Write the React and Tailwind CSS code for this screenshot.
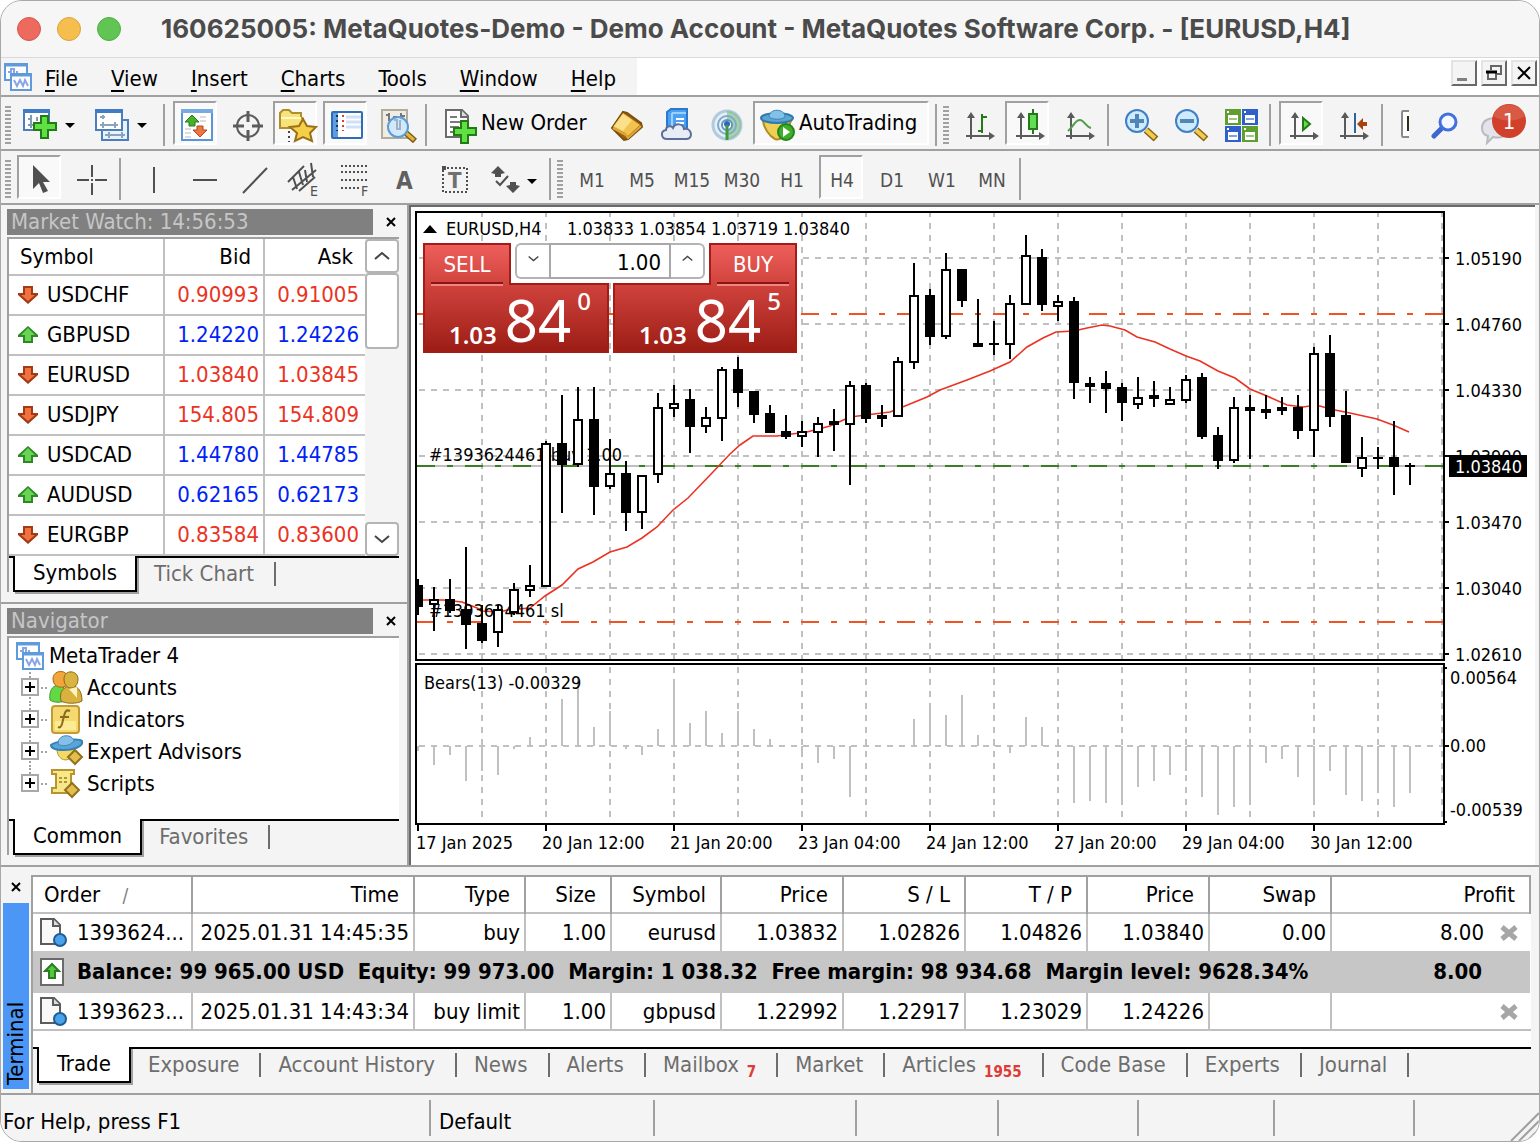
import React, { useState } from 'react';

const quotes = [
    { symbol: 'USDCHF', bid: '0.90993', ask: '0.91005', up: false },
    { symbol: 'GBPUSD', bid: '1.24220', ask: '1.24226', up: true },
    { symbol: 'EURUSD', bid: '1.03840', ask: '1.03845', up: false },
    { symbol: 'USDJPY', bid: '154.805', ask: '154.809', up: false },
    { symbol: 'USDCAD', bid: '1.44780', ask: '1.44785', up: true },
    { symbol: 'AUDUSD', bid: '0.62165', ask: '0.62173', up: true },
    { symbol: 'EURGBP', bid: '0.83584', ask: '0.83600', up: false },
];

const orders = [
    ['1393624...', '2025.01.31 14:45:35', 'buy', '1.00', 'eurusd', '1.03832', '1.02826', '1.04826', '1.03840', '0.00', '8.00'],
    ['1393623...', '2025.01.31 14:43:34', 'buy limit', '1.00', 'gbpusd', '1.22992', '1.22917', '1.23029', '1.24226', '', ''],
];

const timeframes = ['M1', 'M5', 'M15', 'M30', 'H1', 'H4', 'D1', 'W1', 'MN'];

const menus = ['File', 'View', 'Insert', 'Charts', 'Tools', 'Window', 'Help'];

// [high, low, body top, body bottom, filled] in chart units
const candles = [
    [579, 615, 585, 607, 1], [587, 631, 599, 605, 0], [579, 613, 599, 611, 1], [547, 649, 609, 625, 1],
    [605, 643, 623, 641, 1], [605, 647, 609, 633, 0], [583, 615, 589, 613, 0], [565, 597, 585, 591, 0],
    [441, 587, 443, 587, 0], [395, 513, 443, 465, 1], [387, 467, 419, 465, 0], [387, 515, 419, 487, 1],
    [439, 489, 473, 487, 0], [461, 531, 473, 513, 1], [475, 529, 475, 513, 0], [393, 483, 407, 475, 0],
    [385, 417, 403, 409, 0], [389, 453, 399, 427, 1], [407, 433, 417, 427, 0], [367, 441, 369, 419, 0],
    [357, 407, 369, 393, 1], [391, 423, 391, 415, 1], [405, 433, 413, 433, 1], [415, 439, 431, 437, 1],
    [421, 447, 431, 437, 0], [417, 457, 423, 433, 0], [409, 451, 421, 425, 1], [381, 485, 385, 425, 0],
    [383, 423, 385, 419, 1], [405, 427, 415, 419, 1], [357, 417, 361, 417, 0], [263, 369, 295, 363, 0],
    [289, 345, 295, 337, 1], [253, 339, 269, 337, 0], [269, 307, 269, 301, 1], [299, 347, 343, 347, 1],
    [321, 355, 343, 345, 1], [295, 359, 303, 345, 0], [235, 305, 255, 305, 0], [249, 311, 257, 305, 1],
    [295, 321, 301, 307, 0], [297, 399, 301, 383, 1], [377, 403, 383, 387, 1], [371, 413, 383, 389, 1],
    [383, 421, 387, 403, 1], [377, 409, 397, 405, 0], [381, 407, 395, 399, 1], [387, 405, 399, 405, 0],
    [375, 403, 379, 401, 0], [373, 439, 377, 437, 1], [427, 469, 435, 461, 1], [397, 463, 407, 461, 0],
    [395, 459, 407, 411, 1], [395, 419, 409, 413, 1], [397, 415, 407, 411, 1], [395, 439, 407, 431, 1],
    [347, 457, 353, 431, 0], [335, 427, 353, 417, 1], [391, 463, 415, 463, 1], [437, 477, 457, 469, 0],
    [447, 469, 457, 459, 1], [421, 495, 457, 467, 1], [463, 485, 465, 467, 1],
];

const bears = [
    751, 765, 755, 781, 771, 775, 749, 737, 739, 699, 677, 727, 711, 749, 755, 729, 679, 723, 711, 733, 711,
    729, 739, 746, 757, 763, 759, 797, 746, 746, 746, 719, 703, 715, 695, 735, 739, 753, 717, 727, 739, 803,
    801, 803, 805, 787, 781, 775, 771, 797, 815, 807, 805, 763, 759, 777, 805, 771, 795, 801, 793, 807, 793,
];

const average =
    '418,600 443,600 462,602 477,608 482,611 500,612 507,610 530,608 545,596 562,585 578,569 593,562 610,552 ' +
    '627,547 642,538 657,527 673,510 688,498 713,472 730,454 740,445 753,436 777,436 807,432 830,426 850,417 ' +
    '890,412 905,406 927,397 940,390 967,380 990,371 1010,362 1027,347 1043,338 1056,332 1074,331 1087,328 ' +
    '1102,325 1110,326 1125,330 1137,337 1155,342 1170,349 1186,356 1200,361 1218,371 1235,378 1250,389 ' +
    '1267,396 1287,405 1303,407 1310,406 1320,406 1330,409 1350,413 1377,419 1393,425 1409,432';

const priceLevels = [
    [258, '1.05190'], [324, '1.04760'], [390, '1.04330'], [456, '1.03900'],
    [522, '1.03470'], [588, '1.03040'], [654, '1.02610'],
];

const dates = [
    '17 Jan 2025', '20 Jan 12:00', '21 Jan 20:00', '23 Jan 04:00',
    '24 Jan 12:00', '27 Jan 20:00', '29 Jan 04:00', '30 Jan 12:00',
];

/* ---------- icons ---------- */

const Icon = ({ children, size = 36 }) => (
    <svg width={size} height={size} viewBox={`0 0 ${size} ${size}`} className="block shrink-0 overflow-visible" aria-hidden="true">
        {children}
    </svg>
);

const Plus = ({ x, y }) => (
    <path
        transform={`translate(${x} ${y})`}
        d="M8 1h7v7h8v7h-8v8H8v-8H1V8h7z"
        fill="#5fe043"
        stroke="#237a17"
        strokeWidth="2"
    />
);

const NewChartIcon = () => (
    <Icon>
        <rect x="-1" y="1" width="25" height="20" fill="#fff" stroke="#4a7fbd" strokeWidth="2" />
        <rect x="-2" y="0" width="27" height="4" fill="#3f7cc4" />
        <path d="M6 6v13M3 10h3M3 16h15M12 8v4" stroke="#7f9ab8" strokeWidth="2" fill="none" />
        <Plus x={8} y={6} />
    </Icon>
);

const ProfilesIcon = () => (
    <Icon>
        <rect x="5" y="11" width="26" height="20" fill="#eaf3fc" stroke="#4a7fbd" strokeWidth="2" />
        <path d="M8 26h20M12 23v6M25 23v6" stroke="#8aa3bf" strokeWidth="2" />
        <rect x="-1" y="1" width="26" height="20" fill="#fff" stroke="#4a7fbd" strokeWidth="2" />
        <rect x="-2" y="0" width="28" height="4" fill="#3f7cc4" />
        <path d="M6 6v4M3 8h5M3 16h18M6 13v6M18 13v6" stroke="#8aa3bf" strokeWidth="2" />
    </Icon>
);

const MarketWatchIcon = () => (
    <Icon>
        <rect x="1" y="1" width="30" height="30" fill="#fff" stroke="#5b95d6" strokeWidth="2" />
        <rect x="0" y="0" width="32" height="4" fill="#78abe4" />
        <path d="M19 8h8M19 12h8M4 20h7M4 24h7M4 28h7" stroke="#d9dde2" strokeWidth="2" strokeDasharray="6 2" />
        <path d="M11 6l7 7h-4v4H8v-4H4z" fill="#46b02a" stroke="#2f7d1c" />
        <path d="M19 28l7-7h-4v-4h-6v4h-4z" fill="#ec7744" stroke="#b5451e" />
    </Icon>
);

const TargetIcon = () => (
    <Icon>
        <circle cx="17" cy="17" r="11" fill="none" stroke="#5c5c5c" strokeWidth="2" />
        <path d="M17 2v11M17 21v11M2 17h11M21 17h11" stroke="#5c5c5c" strokeWidth="3" />
    </Icon>
);

const star = 'M22 10l4 7 9 1-6 6 2 8-9-4-8 4 2-8-7-6 9-1z';

const NavigatorIcon = () => (
    <Icon>
        <path d="M-1 19V4l3-3h6l3 3h9v4l2 2v9z" fill="#f8e27a" stroke="#b08e2c" strokeWidth="2" />
        <path d="M0 9h20" stroke="#fff8c8" strokeWidth="2" />
        <path d="M8 22v11" stroke="#444" strokeWidth="2" strokeDasharray="2 3" />
        <path d={star} fill="#f6cf48" stroke="#9a6f18" strokeWidth="2" />
    </Icon>
);

const TerminalIcon = () => (
    <Icon>
        <rect x="1" y="3" width="30" height="26" rx="1" fill="#fff" stroke="#2f6cb3" strokeWidth="2" />
        <rect x="2" y="4" width="5" height="24" fill="#5e9be0" />
        <path d="M15 8h15M15 13h15M15 18h15" stroke="#cfe0f8" strokeWidth="3" />
        <path d="M6 6v16" stroke="#1c3454" strokeWidth="2" strokeDasharray="2 3" />
        <path d="M12 6v16" stroke="#e23c2c" strokeWidth="2" strokeDasharray="2 3" />
    </Icon>
);

const TesterIcon = () => (
    <Icon>
        <rect x="1" y="1" width="25" height="28" fill="#efece4" stroke="#b3ab9b" strokeWidth="2" />
        <path d="M8 4v8M5 6h3M20 4v8M20 7h4M12 8h4" stroke="#777" strokeWidth="2" />
        <path d="M25 24l9 8" stroke="#7d5a12" strokeWidth="6" />
        <path d="M25 24l8 7" stroke="#e3b340" strokeWidth="3" />
        <circle cx="17" cy="18" r="10" fill="#cfe9fb" fillOpacity=".9" stroke="#5a9bd8" strokeWidth="2" />
        <path d="M13 11h3v9h3v-9" fill="none" stroke="#9db4c8" strokeWidth="2" />
    </Icon>
);

const NewOrderIcon = () => (
    <Icon>
        <path d="M3 1h16l6 6v21H3z" fill="#fff" stroke="#6b6b6b" strokeWidth="2" />
        <path d="M18 1v7h7" fill="#ddd" stroke="#6b6b6b" strokeWidth="2" />
        <path d="M7 8h7M7 13h13M7 18h9M7 23h5" stroke="#7a7a7a" strokeWidth="2" />
        <Plus x={10} y={11} />
    </Icon>
);

const BookIcon = () => (
    <Icon>
        <path d="M1 19L12 3l4 1 14 10 1 4-14 12-4 1z" fill="#9a6412" stroke="#7d4e0d" strokeWidth="2" />
        <path d="M2 18L12 4l17 12-12 11-3-3z" fill="#f1c34e" />
        <path d="M3 17l9-12 9 6-9 11z" fill="#fbe08a" />
        <path d="M2 19l13 7 2 3 13-12" fill="none" stroke="#e0a83a" strokeWidth="2" />
    </Icon>
);

const HostingIcon = () => (
    <Icon>
        <path d="M6 3l4-3h16v20H6z" fill="#4ba1f2" stroke="#2b78cc" strokeWidth="2" />
        <path d="M11 4h14M11 4v14" stroke="#9bd0ff" strokeWidth="2" />
        <path d="M15 10h8M15 14h8" stroke="#fff" strokeWidth="2" />
        <path
            d="M6 30c-6 0-7-8-1-9 0-4 5-5 7-2 2-5 10-5 11 1 7-2 10 9 3 10z"
            fill="#e8ecf5"
            stroke="#5b6f9a"
            strokeWidth="2"
        />
    </Icon>
);

const SignalsIcon = () => (
    <Icon>
        <circle cx="16" cy="16" r="14" fill="#e6eff6" stroke="#b0cbe0" strokeWidth="3" />
        <path d="M16 2a14 14 0 0 1 0 28z" fill="#7dbb7c" fillOpacity=".6" />
        <circle cx="16" cy="16" r="9" fill="none" stroke="#7fabc9" strokeWidth="2" />
        <circle cx="16" cy="16" r="5" fill="#fff" stroke="#5c93c7" strokeWidth="2" />
        <circle cx="16" cy="15" r="3" fill="#2c66c2" />
        <path d="M16 16v15" stroke="#3f9a37" strokeWidth="3" />
    </Icon>
);

const AutoTradingIcon = () => (
    <Icon>
        <path d="M2 12c1 7 6 15 12 18 5 2 10-2 16-18z" fill="#f0cf57" stroke="#b48d25" strokeWidth="2" />
        <ellipse cx="16" cy="9" rx="16" ry="5" fill="#5ba4d4" stroke="#2f7aad" strokeWidth="2" />
        <path d="M8 8c0-9 16-9 16 0-4 3-12 3-16 0z" fill="#84c1e8" stroke="#3a86b8" />
        <circle cx="25" cy="23" r="8" fill="#3fae2a" stroke="#23851a" strokeWidth="2" />
        <path d="M22 18l7 5-7 5z" fill="#fff" />
    </Icon>
);

const Axes = ({ children }) => (
    <Icon>
        <path d="M8 30V6M3 27h26" stroke="#5a5a5a" strokeWidth="2" />
        <path d="M4 9l4-6 4 6zM26 23l6 4-6 4z" fill="#5a5a5a" />
        {children}
    </Icon>
);

const ZoomIcon = ({ plus }) => (
    <Icon>
        <path d="M21 21l10 9" stroke="#8a6512" strokeWidth="7" />
        <path d="M21 21l9 8" stroke="#f0cb52" strokeWidth="4" />
        <circle cx="12" cy="12" r="11" fill="#cdeaff" stroke="#3f7fc4" strokeWidth="2" />
        <path d={plus ? 'M5 12h14M12 5v14' : 'M5 12h14'} stroke="#4f86b4" strokeWidth="4" />
    </Icon>
);

const TileIcon = () => (
    <Icon>
        {[[0, 0, '#5f9e2f'], [17, 0, '#2f5fc8'], [0, 17, '#2f5fc8'], [17, 17, '#5f9e2f']].map(([x, y, c]) => (
            <g key={`${x}-${y}`}>
                <rect x={x} y={y} width="16" height="16" fill={c} />
                <rect x={x + 3} y={y + 6} width="10" height="8" fill="#fff" />
                <path d={`M${x + 4} ${y + 10}h8`} stroke={c} strokeWidth="2" strokeOpacity=".6" />
                <path d={`M${x + 2} ${y + 3}h2`} stroke="#fff" strokeWidth="2" />
            </g>
        ))}
    </Icon>
);

const CandleMark = () => (
    <>
        <path d="M20 0v25" stroke="#237a17" strokeWidth="2" />
        <rect x="16" y="5" width="8" height="15" fill="#63dd55" stroke="#237a17" strokeWidth="2" />
    </>
);

const AlertIcon = () => (
    <svg width="48" height="42" viewBox="0 0 48 42" className="block" aria-label="1 notification">
        <path d="M1 25c0-8 8-11 16-9s12 9 8 15c-3 4-8 4-13 3l-6 6 1-7c-4-1-6-4-6-8z" fill="#e3e3ea" stroke="#b9b9bf" strokeWidth="2" />
        <circle cx="28" cy="18" r="17" fill="#d0402b" />
        <path d="M12 13a17 17 0 0 1 32 0 30 30 0 0 1-32 0z" fill="#d85a44" />
        <text x="28" y="26" textAnchor="middle" fontSize="22" fill="#fff">1</text>
    </svg>
);

const DirectionIcon = ({ up }) => (
    <svg width="22" height="20" viewBox="0 0 22 20" className="block shrink-0" aria-hidden="true">
        {up ? (
            <>
                <path d="M11 1l10 9v2h-5v6H6v-6H1v-2z" fill="#2c8a24" />
                <path d="M11 3l7 7h-4v6H8v-6H4z" fill="#6bd354" />
            </>
        ) : (
            <>
                <path d="M11 19L1 10V8h5V1h10v7h5v2z" fill="#a23a14" />
                <path d="M11 16l-7-6h4V3h6v7h4z" fill="#f3713f" />
            </>
        )}
    </svg>
);

const LogoIcon = () => (
    <svg width="30" height="30" viewBox="0 0 30 30" className="block shrink-0" aria-hidden="true">
        <rect x="2" y="2" width="22" height="16" fill="#fff" stroke="#5f9bdc" strokeWidth="2" />
        <path d="M1 3h24" stroke="#5f9bdc" strokeWidth="3" />
        <path d="M5 10h3v-3h3v6h3v-4" fill="none" stroke="#8aa5e6" strokeWidth="2" />
        <rect x="8" y="12" width="20" height="16" fill="#fff" stroke="#5f9bdc" strokeWidth="2" />
        <path d="M7 13h22" stroke="#5f9bdc" strokeWidth="3" />
        <path d="M11 18l3 6 3-6 3 6 2-6 3 6" fill="none" stroke="#8aa5e6" strokeWidth="2" />
    </svg>
);

const AccountsIcon = () => (
    <Icon size={34}>
        <path d="M1 29c-1-9 2-14 8-15s8 6 8 15c-4 3-12 3-16 0z" fill="#62d844" stroke="#3a9a28" />
        <path d="M4 8c0-10 14-9 14-3v9c-4 4-14 3-14-6z" fill="#f2a53a" stroke="#a66b18" />
        <path d="M12 30c-2-9 2-14 9-15s12 4 12 15c-5 3-16 3-21 0z" fill="#d8b23c" stroke="#8a6a18" />
        <path d="M15 8c0-10 14-9 14 0 0 12-14 12-14 0z" fill="#d9b440" stroke="#8a6a18" />
        <path d="M20 18l8 9V16z" fill="#fff4c0" />
    </Icon>
);

const IndicatorsIcon = () => (
    <Icon size={34}>
        <rect x="3" y="3" width="27" height="27" rx="3" fill="#f4d970" stroke="#c49a35" strokeWidth="2" />
        <rect x="6" y="18" width="21" height="9" fill="#fbeb92" />
        <path d="M21 8c-4-2-5 1-6 5l-2 8c-1 3-2 4-4 3M11 14h9" fill="none" stroke="#8a6a1c" strokeWidth="2" />
    </Icon>
);

const Diamond = ({ x, y }) => (
    <path transform={`translate(${x} ${y})`} d="M7 0l7 7-7 7-7-7z" fill="#e2be4d" stroke="#93701e" strokeWidth="2" />
);

const ExpertsIcon = () => (
    <Icon size={34}>
        <path d="M8 14c0 14 16 15 18 0z" fill="#f3d965" stroke="#b8942f" />
        <path d="M2 10c3-3 27-8 31-4 2 6-10 9-18 9S2 14 2 10z" fill="#5ba4d8" stroke="#3582b6" strokeWidth="2" />
        <path d="M9 9c0-11 15-10 16-3-4 5-12 6-16 3z" fill="#84bfe8" stroke="#3f88bd" />
        <Diamond x={19} y={15} />
    </Icon>
);

const ScriptsIcon = () => (
    <Icon size={34}>
        <path d="M3 3h22v4h-3v14h3v5H3v-5h4V7H3z" fill="#f6e78b" stroke="#b8942f" strokeWidth="2" />
        <path d="M10 11h9M10 15h9" stroke="#b8942f" strokeWidth="2" strokeDasharray="3 2" />
        <Diamond x={16} y={16} />
    </Icon>
);

const Caret = () => <span className="block border-x-5 border-t-5 border-x-transparent border-t-black" />;

/* ---------- small controls ---------- */

const ToolButton = ({ label, pressed, wide, children }) => (
    <button
        type="button"
        aria-label={label}
        aria-pressed={pressed}
        className={`flex h-11 shrink-0 items-start border-2 pt-1.5 pl-1.5 ${wide || 'w-11'} ${
            pressed ? 'border-t-[#a0a0a0] border-r-white border-b-white border-l-[#a0a0a0] bg-[#f9f9f9]' : 'border-transparent'
        }`}
    >
        {children}
    </button>
);

const Separator = ({ className = '' }) => <span className={`h-[42px] w-0.5 shrink-0 self-center bg-[#a0a0a0] ${className}`} />;

const Grip = () => (
    <span className="h-[38px] w-1.5 shrink-0 self-center bg-[repeating-linear-gradient(#a0a0a0_0_2px,#f4f4f4_2px_4px)]" />
);

const CloseButton = ({ label }) => (
    <button type="button" aria-label={label} className="flex h-6 w-6 items-center justify-center">
        <svg width="10" height="10" viewBox="0 0 10 10" stroke="#000" strokeWidth="2">
            <path d="M1 1l8 8M9 1l-8 8" />
        </svg>
    </button>
);

const TabStrip = ({ tabs, label }) => {
    const [active, setActive] = useState(tabs[0].name);

    return (
        <div className="flex h-9 border-t-2 border-black bg-[#f4f4f4] pl-1" role="tablist" aria-label={label}>
            {tabs.map((tab) =>
                tab.name === active ? (
                    <button
                        key={tab.name}
                        type="button"
                        role="tab"
                        aria-selected="true"
                        className="-mt-0.5 h-9 border-2 border-t-0 border-black bg-white px-[18px] shadow-[2px_2px_0_#a0a0a0]"
                    >
                        {tab.name}
                    </button>
                ) : (
                    <button
                        key={tab.name}
                        type="button"
                        role="tab"
                        aria-selected="false"
                        onClick={() => setActive(tab.name)}
                        className="flex h-8 items-center pl-[17px] text-[#6d6d6d]"
                    >
                        {tab.name}
                        {tab.count && <span className="mt-3.5 ml-2 text-[15px] leading-4 font-bold text-[#e03a34]">{tab.count}</span>}
                        <span className="ml-5 h-6 w-0.5 bg-[#6d6d6d]" />
                    </button>
                )
            )}
        </div>
    );
};

const PanelHeader = ({ title }) => (
    <div className="flex h-[26px] items-center justify-between pr-1">
        <h2 className="mr-1.5 h-full flex-1 bg-[#808080] pl-1 leading-[26px] text-[#c6c6c6]">{title}</h2>
        <CloseButton label={`Close ${title}`} />
    </div>
);

/* ---------- window chrome ---------- */

const TitleBar = () => (
    <header className="flex h-14 shrink-0 items-center bg-[#f6f6f6] pl-4">
        <div className="flex gap-4">
            <button type="button" aria-label="Close" className="h-6 w-6 rounded-full border border-[#d9574c] bg-[#ee6a5f]" />
            <button type="button" aria-label="Minimize" className="h-6 w-6 rounded-full border border-[#dba43a] bg-[#f5be4f]" />
            <button type="button" aria-label="Zoom" className="h-6 w-6 rounded-full border border-[#50ad43] bg-[#61c554]" />
        </div>
        <h1 className="ml-10 font-[Inter,sans-serif] text-[26px] leading-9 font-bold whitespace-nowrap text-[#4b4b4b]">
            160625005: MetaQuotes-Demo - Demo Account - MetaQuotes Software Corp. - [EURUSD,H4]
        </h1>
    </header>
);

const mdiClass = 'flex h-[26px] w-[26px] items-center justify-center border-2 border-t-[#e3e3e3] border-r-[#696969] border-b-[#696969] border-l-[#e3e3e3] bg-[#f4f4f4]';

const MenuBar = () => (
    <div className="flex h-10 shrink-0 items-start justify-between border-t border-b-2 border-t-[#d9d9d9] border-b-[#a0a0a0] bg-white">
        <nav className="flex h-full items-center bg-[#f4f4f4] pl-0.5">
            <LogoIcon />
            {menus.map((name) => (
                <button key={name} type="button" className="mr-[9px] px-3 pt-1">
                    <span className="underline decoration-2 underline-offset-4">{name[0]}</span>
                    {name.slice(1)}
                </button>
            ))}
        </nav>
        <div className="flex gap-1 pt-0.5 pr-0.5">
            <button type="button" aria-label="Minimize chart" className={mdiClass}>
                <span className="mt-3 mr-1 h-[3px] w-2.5 bg-[#808080]" />
            </button>
            <button type="button" aria-label="Restore chart" className={mdiClass}>
                <svg width="18" height="18" viewBox="0 0 18 18" fill="none" stroke="#666" strokeWidth="2">
                    <path d="M6 6V2h10v8h-4" />
                    <rect x="3" y="8" width="8" height="7" />
                    <path d="M1 8h11" stroke="#000" strokeWidth="3" />
                </svg>
            </button>
            <button type="button" aria-label="Close chart" className={mdiClass}>
                <svg width="16" height="16" viewBox="0 0 16 16" stroke="#000" strokeWidth="2">
                    <path d="M2 2l12 12M14 2L2 14" />
                </svg>
            </button>
        </div>
    </div>
);

const barClass = 'flex h-[54px] shrink-0 items-start gap-1.5 overflow-hidden border-b-2 border-[#a0a0a0] bg-[#f4f4f4] pt-1 pl-1';

const MainToolbar = () => (
    <div className={barClass}>
        <Grip />
        <ToolButton label="New chart" wide="w-[66px]">
            <NewChartIcon />
            <span className="mt-3.5 ml-1"><Caret /></span>
        </ToolButton>
        <ToolButton label="Profiles" wide="w-[66px]">
            <ProfilesIcon />
            <span className="mt-3.5 ml-1"><Caret /></span>
        </ToolButton>
        <Separator className="mx-0.5" />
        <ToolButton label="Market Watch" pressed><MarketWatchIcon /></ToolButton>
        <ToolButton label="Data Window"><TargetIcon /></ToolButton>
        <ToolButton label="Navigator" pressed><NavigatorIcon /></ToolButton>
        <ToolButton label="Terminal" pressed><TerminalIcon /></ToolButton>
        <ToolButton label="Strategy Tester"><TesterIcon /></ToolButton>
        <Separator className="mx-0.5" />
        <ToolButton label="New Order" wide="w-[162px]">
            <NewOrderIcon />
            <span className="ml-0.5 whitespace-nowrap">New Order</span>
        </ToolButton>
        <ToolButton label="MetaEditor"><BookIcon /></ToolButton>
        <ToolButton label="Virtual hosting"><HostingIcon /></ToolButton>
        <ToolButton label="Signals"><SignalsIcon /></ToolButton>
        <ToolButton label="AutoTrading" pressed wide="w-[176px]">
            <AutoTradingIcon />
            <span className="ml-0.5 whitespace-nowrap">AutoTrading</span>
        </ToolButton>
        <Separator />
        <Grip />
        <ToolButton label="Bar chart">
            <Axes><path d="M19 5v19M19 8h5M15 22h4" stroke="#237a17" strokeWidth="2" /></Axes>
        </ToolButton>
        <ToolButton label="Candlesticks" pressed><Axes><CandleMark /></Axes></ToolButton>
        <ToolButton label="Line chart">
            <Axes><path d="M5 22c6-5 7-11 12-11 4 0 6 7 11 8" fill="none" stroke="#4f9d4a" strokeWidth="2" /></Axes>
        </ToolButton>
        <Separator className="mx-0.5" />
        <ToolButton label="Zoom in"><ZoomIcon plus /></ToolButton>
        <ToolButton label="Zoom out"><ZoomIcon /></ToolButton>
        <ToolButton label="Tile windows"><TileIcon /></ToolButton>
        <Separator className="mx-0.5" />
        <ToolButton label="Auto scroll" pressed>
            <Axes><path d="M16 9l7 6-7 6z" fill="#5fe043" stroke="#237a17" strokeWidth="2" /></Axes>
        </ToolButton>
        <ToolButton label="Chart shift">
            <Axes>
                <path d="M18 4v20" stroke="#2d6799" strokeWidth="2" />
                <path d="M20 15l6-6v4h4v4h-4v4z" fill="#a8400f" />
            </Axes>
        </ToolButton>
        <Separator className="mx-0.5" />
        <button type="button" aria-label="Indicators" className="mt-2 ml-2.5 h-8 w-2 shrink-0">
            <svg width="8" height="30" viewBox="0 0 8 30">
                <path d="M8 1H2Q1 1 1 3v22q0 2 1 2h6" fill="#fff" stroke="#8a8a8a" strokeWidth="2" />
                <path d="M7 6v15" stroke="#26331a" strokeWidth="2" />
            </svg>
        </button>
        <div className="ml-auto flex gap-4 pr-2.5">
            <button type="button" aria-label="Search" className="mt-2 mr-1">
                <svg width="30" height="30" viewBox="0 0 30 30">
                    <path d="M3 24l8-8" stroke="#3d66cf" strokeWidth="5" strokeLinecap="round" />
                    <circle cx="17" cy="10" r="8" fill="#f4f8ff" stroke="#4271dc" strokeWidth="3" />
                </svg>
            </button>
            <button type="button" className="mt-0.5"><AlertIcon /></button>
        </div>
    </div>
);

const gray = { fill: 'none', stroke: '#505050', strokeWidth: 2 };

const LineToolbar = () => (
    <div className={barClass}>
        <Grip />
        <ToolButton label="Cursor" pressed>
            <Icon><path d="M8 2v24l6-6 4 10 5-2-5-9h7z" fill="#505050" /></Icon>
        </ToolButton>
        <ToolButton label="Crosshair">
            <Icon><path d="M17 2v12M17 20v12M2 17h12M20 17h12M16 17h2" {...gray} /></Icon>
        </ToolButton>
        <Separator className="mx-0.5" />
        <ToolButton label="Vertical line"><Icon><path d="M17 4v26" {...gray} /></Icon></ToolButton>
        <ToolButton label="Horizontal line"><Icon><path d="M6 17h24" {...gray} /></Icon></ToolButton>
        <ToolButton label="Trendline"><Icon><path d="M6 30L30 5" {...gray} /></Icon></ToolButton>
        <ToolButton label="Equidistant channel">
            <Icon>
                <path d="M1 19L17 3M5 27L29 7M12 28l16-14M6 14l4 12M12 9l4 13M18 7l2 12M24 0l2 14" {...gray} />
                <text x="23" y="33" fontSize="14" fill="#505050">E</text>
            </Icon>
        </ToolButton>
        <ToolButton label="Fibonacci retracement">
            <Icon>
                <path d="M4 3h28M4 9h28M4 17h28M4 25h18" {...gray} strokeDasharray="2 2" />
                <text x="24" y="33" fontSize="14" fill="#505050">F</text>
            </Icon>
        </ToolButton>
        <ToolButton label="Text">
            <Icon><text x="9" y="26" fontSize="24" fontWeight="bold" fill="#606060">A</text></Icon>
        </ToolButton>
        <ToolButton label="Text label">
            <Icon>
                <rect x="6" y="5" width="24" height="24" {...gray} strokeDasharray="2 2" />
                <path d="M5 3h4v4H5z" fill="#505050" />
                <text x="11" y="25" fontSize="22" fontWeight="bold" fill="#707070">T</text>
            </Icon>
        </ToolButton>
        <ToolButton label="Arrows" wide="w-16">
            <Icon>
                <path d="M11 3l7 7-4 1v3H8v-3l-4-1zM26 30l7-7-4-1v-3h-6v3l-4 1z" fill="#505050" />
                <path d="M9 18l4 4 8-9" {...gray} />
            </Icon>
            <span className="mt-4 ml-1"><Caret /></span>
        </ToolButton>
        <Separator />
        <Grip />
        {timeframes.map((tf) => (
            <button
                key={tf}
                type="button"
                aria-pressed={tf === 'H4'}
                className={`h-11 w-11 shrink-0 border-2 pt-1.5 pl-0.5 text-center text-[19px] text-[#505050] ${
                    tf === 'H4' ? 'border-t-[#a0a0a0] border-r-white border-b-white border-l-[#a0a0a0] bg-[#f9f9f9]' : 'border-transparent'
                }`}
            >
                <span className="-mx-2">{tf}</span>
            </button>
        ))}
        <Separator />
    </div>
);

/* ---------- left column ---------- */

const Chevron = ({ up, size = 16 }) => (
    <svg width={size} height={size} viewBox="0 0 16 16" fill="none" stroke="#444" strokeWidth="2" aria-hidden="true">
        <path d={up ? 'M1 11l7-6 7 6' : 'M1 5l7 6 7-6'} />
    </svg>
);

const scrollClass = 'flex w-full items-center justify-center rounded border-2 border-[#b4b4b4] bg-white';

const MarketWatch = () => (
    <section className="border-b-2 border-[#a0a0a0] pt-1 pb-2.5 pl-1.5">
        <PanelHeader title="Market Watch: 14:56:53" />
        <div className="mt-0.5 mr-2 border-t-2 border-l-2 border-[#a0a0a0]">
            <div className="flex">
                <table className="flex-1 table-fixed border-collapse bg-white">
                    <thead>
                        <tr className="h-9 border-b-2 border-[#c0c0c0]">
                            <th className="w-[155px] border-r-2 border-[#c0c0c0] pl-[11px] text-left font-normal">Symbol</th>
                            <th className="w-[100px] border-r-2 border-[#c0c0c0] pr-3 text-right font-normal">Bid</th>
                            <th className="pr-3 text-right font-normal">Ask</th>
                        </tr>
                    </thead>
                    <tbody>
                        {quotes.map((q) => (
                            <tr key={q.symbol} className="h-10 border-b-2 border-[#c0c0c0]">
                                <td className="border-r-2 border-[#c0c0c0] pl-2">
                                    <span className="flex items-center gap-2"><DirectionIcon up={q.up} />{q.symbol}</span>
                                </td>
                                <td className={`border-r-2 border-[#c0c0c0] pr-1 text-right ${q.up ? 'text-[#0022f5]' : 'text-[#ea3323]'}`}>{q.bid}</td>
                                <td className={`pr-1.5 text-right ${q.up ? 'text-[#0022f5]' : 'text-[#ea3323]'}`}>{q.ask}</td>
                            </tr>
                        ))}
                    </tbody>
                </table>
                <div className="flex w-[34px] shrink-0 flex-col justify-between bg-[#f4f4f4]">
                    <div>
                        <button type="button" aria-label="Scroll up" className={`h-[34px] ${scrollClass}`}><Chevron up /></button>
                        <div className={`h-[76px] ${scrollClass}`} />
                    </div>
                    <button type="button" aria-label="Scroll down" className={`h-[34px] ${scrollClass}`}><Chevron /></button>
                </div>
            </div>
            <TabStrip label="Market Watch" tabs={[{ name: 'Symbols' }, { name: 'Tick Chart' }]} />
        </div>
    </section>
);

const TreeItem = ({ name, icon, last }) => (
    <li className="flex h-8 items-center pl-3">
        <button type="button" aria-label={`Expand ${name}`}>
            <svg width="28" height="32" viewBox="0 0 28 32" className="block">
                <path d={last ? 'M9 0v7M20 16h8' : 'M9 0v7M9 25v7M20 16h8'} stroke="#a0a0a0" strokeWidth="2" strokeDasharray="2 2" />
                <rect x="1" y="7" width="16" height="16" fill="#fff" stroke="#a8a8a8" strokeWidth="2" />
                <path d="M4 15h10M9 10v10" stroke="#000" strokeWidth="2" />
            </svg>
        </button>
        {icon}
        <span className="ml-1">{name}</span>
    </li>
);

const Navigator = () => (
    <section className="flex flex-1 flex-col pt-1 pb-2.5 pl-1.5">
        <PanelHeader title="Navigator" />
        <div className="mt-0.5 mr-2 flex flex-1 flex-col border-t-2 border-l-2 border-[#a0a0a0]">
            <ul className="flex-1 bg-white pt-0.5">
                <li className="flex h-8 items-center gap-1 pl-1.5"><LogoIcon />MetaTrader 4</li>
                <TreeItem name="Accounts" icon={<AccountsIcon />} />
                <TreeItem name="Indicators" icon={<IndicatorsIcon />} />
                <TreeItem name="Expert Advisors" icon={<ExpertsIcon />} />
                <TreeItem name="Scripts" icon={<ScriptsIcon />} last />
            </ul>
            <TabStrip label="Navigator" tabs={[{ name: 'Common' }, { name: 'Favorites' }]} />
        </div>
    </section>
);

/* ---------- chart ---------- */

const TradeSide = ({ side, pips, fraction }) => {
    const buy = side === 'BUY';
    return (
        <button type="button" className={`flex flex-col text-white ${buy ? 'w-[184px] items-end' : 'w-[186px] items-start'}`}>
            <span className="z-10 -mb-0.5 h-[42px] w-[88px] border-2 border-b-0 border-[#a31c15] bg-linear-to-b from-[#ee5f5b] to-[#d0423c] px-1.5 pt-1.5">
                <span className="block border-b-2 border-[#8b1510] pb-[3px] leading-7 shadow-[0_2px_0_#ee8580]">{side}</span>
            </span>
            <span className="flex h-[70px] w-full border-2 border-[#a31c15] bg-linear-to-b from-[#d0423c] to-[#9c1d15] pl-6 font-['Noto_Sans',sans-serif]">
                <span className="mt-[34px] text-[24px] leading-8 font-semibold">1.03</span>
                <span className="ml-2 text-[58px] leading-[70px]">{pips}</span>
                <span className="mt-0.5 ml-1.5 text-[24px] leading-7 font-medium">{fraction}</span>
            </span>
        </button>
    );
};

const OneClickTrading = () => {
    const [volume, setVolume] = useState('1.00');
    const step = (d) => setVolume((v) => Math.max(0.01, Number(v) + d).toFixed(2));
    const stepClass = 'flex w-[34px] items-center justify-center border-2 border-[#b4b4b4] pb-1.5';

    return (
        <div className="absolute top-9 left-3">
            <div className="flex gap-1">
                <TradeSide side="SELL" pips="84" fraction="0" />
                <TradeSide side="BUY" pips="84" fraction="5" />
            </div>
            <div className="absolute top-0 left-[88px] flex h-10 w-[198px] justify-center bg-white pb-1">
                <button type="button" aria-label="Decrease volume" onClick={() => step(-0.01)} className={`${stepClass} rounded-l-md border-r-0`}>
                    <Chevron size={11} />
                </button>
                <input
                    aria-label="Volume"
                    value={volume}
                    onChange={(e) => setVolume(e.target.value)}
                    className="w-[122px] border-2 border-[#a8a8a8] bg-white pt-1 pr-2 text-right outline-none"
                />
                <button type="button" aria-label="Increase volume" onClick={() => step(0.01)} className={`${stepClass} rounded-r-md border-l-0`}>
                    <Chevron up size={11} />
                </button>
            </div>
        </div>
    );
};

const columns = Array.from({ length: 16 }, (_, i) => 482 + i * 64);

const PriceChart = () => (
    <svg viewBox="411 207 1124 658" className="block w-full" fontSize="18" role="img" aria-label="EURUSD H4 price chart">
        <g stroke="#c0c0c0" strokeWidth="2" strokeDasharray="6 6">
            {columns.map((x) => <path key={x} d={`M${x} 211V659M${x} 667V823`} />)}
            {priceLevels.map(([y]) => <path key={y} d={`M419 ${y}H1443`} />)}
            <path d="M419 746H1443" />
        </g>
        <path d="M417 466H1443" stroke="#c0c0c0" strokeWidth="2" />
        <path d="M417 466H1443" stroke="#3a7d22" strokeWidth="2" strokeDasharray="18 12 6 12" />
        <path d="M417 314H1443M417 622H1443" stroke="#f05423" strokeWidth="2" strokeDasharray="18 12 6 12" />
        <polyline points={average} fill="none" stroke="#ea3323" strokeWidth="1.6" />

        <path d="M423 233l7-8 7 8z" />
        <text x="446" y="235">EURUSD,H4</text>
        {['1.03833', '1.03854', '1.03719', '1.03840'].map((p, i) => <text key={p} x={567 + i * 72} y="235">{p}</text>)}
        <text x="429" y="461">#1393624461 buy 1.00</text>
        <text x="429" y="617">#1393624461 sl</text>

        {candles.map(([high, low, top, bottom, filled], i) => {
            const x = 418 + i * 16;
            const left = Math.max(x - 5, 416);
            return (
                <g key={x}>
                    <rect x={x - 1} y={high} width="2" height={low - high} />
                    <rect x={left} y={top} width={x + 5 - left} height={bottom - top} />
                    {!filled && <rect x={x - 3} y={top + 2} width="6" height={bottom - top - 4} fill="#fff" />}
                </g>
            );
        })}

        <path d={bears.map((y, i) => `M${418 + i * 16} 746V${y}`).join('')} stroke="#c0c0c0" strokeWidth="2" />
        <text x="424" y="689">Bears(13) -0.00329</text>

        <g fill="none" stroke="#000" strokeWidth="2">
            <rect x="416" y="212" width="1028" height="448" />
            <rect x="416" y="664" width="1028" height="160" />
            <path d="M1445 668h2M1445 746h4M1445 822h2" />
            {priceLevels.map(([y]) => <path key={y} d={`M1445 ${y}h4`} />)}
            {dates.map((d, i) => <path key={d} d={`M${418 + i * 128} 825v6`} />)}
        </g>
        {priceLevels.map(([y, label]) => <text key={y} x="1455" y={y + 7}>{label}</text>)}
        <text x="1450" y="684">0.00564</text>
        <text x="1450" y="752">0.00</text>
        <text x="1450" y="816">-0.00539</text>
        {dates.map((d, i) => <text key={d} x={i ? 414 + i * 128 : 416} y="849">{d}</text>)}
        <rect x="1449" y="455" width="78" height="22" />
        <text x="1455" y="473" fill="#fff">1.03840</text>
    </svg>
);

/* ---------- terminal ---------- */

const OrderIcon = () => (
    <svg width="28" height="32" viewBox="0 0 28 32" className="block shrink-0" aria-hidden="true">
        <path d="M2 2h13l6 6v19H2z" fill="#f8f8f8" stroke="#5c5c5c" strokeWidth="2" />
        <path d="M14 2v7h7" fill="#ddd" stroke="#5c5c5c" strokeWidth="2" />
        <circle cx="21" cy="23" r="6" fill="#4aa3ea" stroke="#1f5c96" strokeWidth="2" />
    </svg>
);

const BalanceIcon = () => (
    <svg width="28" height="30" viewBox="0 0 28 30" className="block shrink-0" aria-hidden="true">
        <rect x="2" y="2" width="22" height="26" fill="#fff" stroke="#6a6a6a" strokeWidth="2" />
        <path d="M13 7l7 7h-4v7h-6v-7H6z" fill="#55c53f" stroke="#2c7a22" strokeWidth="2" />
    </svg>
);

const DeleteCross = () => (
    <button type="button" aria-label="Close order" className="ml-4">
        <svg width="18" height="18" viewBox="0 0 18 18" stroke="#a6a6a6" strokeWidth="5">
            <path d="M2 3l14 12M16 3L2 15" />
        </svg>
    </button>
);

const headings = [
    ['Time', 'w-[222px]'], ['Type', 'w-[111px]'], ['Size', 'w-[86px]'], ['Symbol', 'w-[110px]'], ['Price', 'w-[122px]'],
    ['S / L', 'w-[122px]'], ['T / P', 'w-[122px]'], ['Price', 'w-[122px]'], ['Swap', 'w-[122px]'],
];

const OrderRow = ({ order }) => (
    <tr className="h-[38px]">
        <td className="border-r-2 border-[#c0c0c0] pl-1.5">
            <span className="flex items-center gap-2.5"><OrderIcon />{order[0]}</span>
        </td>
        {order.slice(1, 10).map((cell, i) => (
            <td key={i} className="border-r-2 border-[#c0c0c0] pr-1 text-right">{cell}</td>
        ))}
        <td className="pr-3">
            <span className="flex items-center justify-end">{order[10]}<DeleteCross /></span>
        </td>
    </tr>
);

const Terminal = () => (
    <section className="flex shrink-0 border-t-2 border-b-2 border-[#a0a0a0] bg-[#f4f4f4] pt-2">
        <div className="flex w-[30px] shrink-0 flex-col items-center">
            <CloseButton label="Close Terminal" />
            <h2 className="mt-1 mb-1 w-[26px] flex-1 rotate-180 bg-[#4c96f5] pt-1 leading-[26px] [writing-mode:vertical-rl]">Terminal</h2>
        </div>
        <div className="mr-2 flex-1 border-t-2 border-l-2 border-[#a0a0a0] pb-2.5">
            <div className="bg-white pb-4">
                <table className="w-full table-fixed border-collapse whitespace-nowrap">
                    <thead>
                        <tr className="h-9 border-b-2 border-[#c0c0c0]">
                            <th className="w-[159px] border-r-2 border-[#a0a0a0] pl-[11px] text-left font-normal">
                                Order <span className="ml-4 text-[19px] text-[#808080]">/</span>
                            </th>
                            {headings.map(([name, width], i) => (
                                <th key={i} className={`border-r-2 border-[#a0a0a0] pr-3.5 text-right font-normal ${width}`}>{name}</th>
                            ))}
                            <th className="border-r-2 border-[#a0a0a0] pr-3.5 text-right font-normal">Profit</th>
                        </tr>
                    </thead>
                    <tbody>
                        <OrderRow order={orders[0]} />
                        <tr className="h-[42px] bg-[#c6c6c6] font-bold">
                            <td colSpan="10" className="pl-1.5">
                                <span className="flex items-center gap-2.5 whitespace-pre">
                                    <BalanceIcon />
                                    {'Balance: 99 965.00 USD  Equity: 99 973.00  Margin: 1 038.32  Free margin: 98 934.68  Margin level: 9628.34%'}
                                </span>
                            </td>
                            <td className="pr-12 text-right">8.00</td>
                        </tr>
                        <OrderRow order={orders[1]} />
                    </tbody>
                </table>
                <div className="-mt-0.5 h-0.5 bg-[#c0c0c0]" />
            </div>
            <TabStrip
                label="Terminal"
                tabs={[
                    { name: 'Trade' }, { name: 'Exposure' }, { name: 'Account History' }, { name: 'News' }, { name: 'Alerts' },
                    { name: 'Mailbox', count: '7' }, { name: 'Market' }, { name: 'Articles', count: '1955' },
                    { name: 'Code Base' }, { name: 'Experts' }, { name: 'Journal' },
                ]}
            />
        </div>
    </section>
);

const StatusBar = () => (
    <footer className="flex h-[46px] shrink-0 items-center bg-[#f4f4f4] pl-0.5">
        <span className="w-[426px] pt-2">For Help, press F1</span>
        <span className="w-[224px] border-l-2 border-[#a0a0a0] pt-2 pl-2">Default</span>
        <span className="h-9 w-[202px] border-l-2 border-[#a0a0a0]" />
        <span className="h-9 w-[142px] border-l-2 border-[#a0a0a0]" />
        <span className="h-9 w-[140px] border-l-2 border-[#a0a0a0]" />
        <span className="h-9 w-[136px] border-l-2 border-[#a0a0a0]" />
        <span className="h-9 w-[140px] border-l-2 border-[#a0a0a0]" />
        <span className="h-9 flex-1 border-l-2 border-[#a0a0a0]" />
        <svg width="30" height="30" viewBox="0 0 30 30" className="self-end" stroke="#a0a0a0" strokeWidth="2" aria-hidden="true">
            <path d="M2 30L30 2M10 30L30 10M18 30L30 18" />
        </svg>
    </footer>
);

export default function App() {
    return (
        <div className="min-h-screen w-full bg-white">
            <div className="flex min-h-screen flex-col overflow-hidden rounded-[22px] border border-[#a8a8a8] bg-[#f4f4f4] font-['DejaVu_Sans_Condensed','DejaVu_Sans',sans-serif] text-[22px] leading-7 text-black">
                <TitleBar />
                <MenuBar />
                <MainToolbar />
                <LineToolbar />
                <main className="flex flex-1">
                    <aside className="flex w-[408px] shrink-0 flex-col border-r-2 border-[#a0a0a0]">
                        <MarketWatch />
                        <Navigator />
                    </aside>
                    <section className="relative mr-1 flex-1 border-t-2 border-l-2 border-[#696969] bg-white">
                        <PriceChart />
                        <OneClickTrading />
                    </section>
                </main>
                <Terminal />
                <StatusBar />
            </div>
        </div>
    );
}
